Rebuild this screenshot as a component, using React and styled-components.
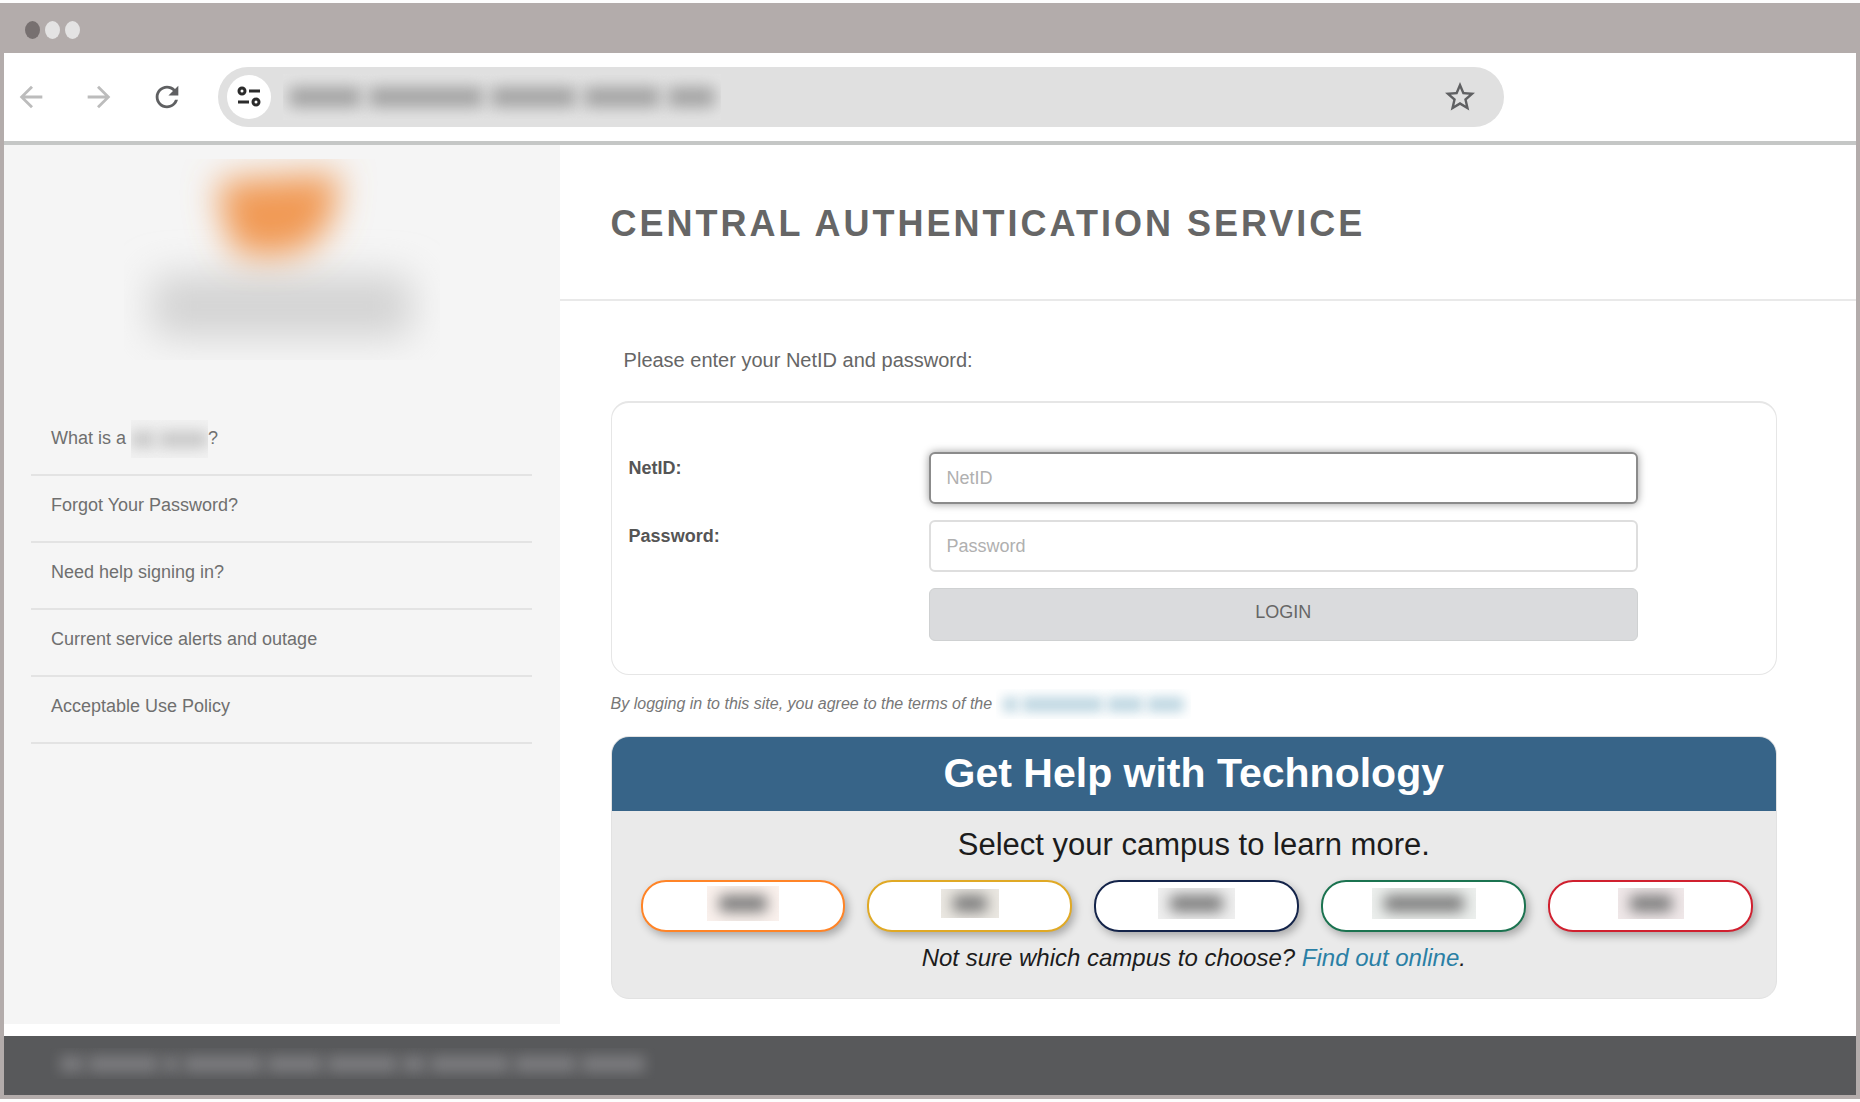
import React from "react";
import styled, { createGlobalStyle } from "styled-components";
import { MdArrowBack, MdArrowForward, MdRefresh, MdStarBorder } from "react-icons/md";

const GlobalStyle = createGlobalStyle`
  *, *::before, *::after { box-sizing: border-box; }
  body {
    margin: 0;
    background: #fdfdfd;
    color: #666;
    font-family: "Liberation Sans", Arial, sans-serif;
    font-size: 18px;
  }
`;

const Frame = styled.div`
  display: flex;
  min-height: 100vh;
  padding: 3px 0;
`;

const BrowserWindow = styled.div`
  flex: 1;
  display: flex;
  flex-direction: column;
  border: 4px solid #b3acab;
  border-top: 0;
  background: #fff;
`;

const TitleBar = styled.div`
  display: flex;
  align-items: center;
  gap: 5px;
  height: 50px;
  padding: 4px 0 0 21px;
  background: #b3acab;
`;

const Dot = styled.span`
  width: 15px;
  height: 18px;
  border-radius: 50%;
  background: ${(p) => (p.$dark ? "#777070" : "#e4e3e3")};
`;

const Toolbar = styled.div`
  display: flex;
  align-items: center;
  gap: 34px;
  height: 92px;
  padding: 0 19% 0 10px;
  border-bottom: 4px solid #c5c7c6;
`;

const IconButton = styled.button`
  display: grid;
  place-items: center;
  width: 34px;
  height: 36px;
  padding: 0;
  border: 0;
  background: none;
  color: ${(p) => (p.$muted ? "#bcbcbc" : "#5f6062")};
  cursor: pointer;
`;

const AddressBar = styled.div`
  flex: 1;
  display: flex;
  align-items: center;
  height: 60px;
  padding: 0 28px 0 9px;
  border-radius: 30px;
  background: #e0e0e0;

  ${IconButton}:last-child {
    margin-left: auto;
  }
`;

const SiteControls = styled.button`
  display: grid;
  place-items: center;
  width: 44px;
  height: 44px;
  margin-right: 12px;
  padding: 0;
  border: 0;
  border-radius: 50%;
  background: #fff;
  cursor: pointer;
`;

const RedactedBox = styled.span`
  flex: none;
  display: inline-flex;
  align-items: center;
  justify-content: center;
  gap: ${(p) => p.$gap}px;
  width: ${(p) => p.$width}px;
  height: ${(p) => p.$height}px;
  padding: 0 ${(p) => p.$inset}px;
  overflow: hidden;
  vertical-align: middle;
  background: ${(p) => p.$tint};
`;

const Smudge = styled.span`
  flex: ${(p) => p.$weight};
  height: ${(p) => p.$height}px;
  border-radius: 4px;
  background: ${(p) => p.$ink};
  filter: blur(${(p) => p.$blur}px);
`;

const Body = styled.div`
  flex: 1;
  display: flex;
`;

const Sidebar = styled.aside`
  width: 30%;
  padding: 14px 28px 0 27px;
  background: #f5f5f5;
`;

const Logo = styled.svg`
  display: block;
  width: 316px;
  height: 201px;
  margin: 0 auto 49px 93px;
`;

const NavList = styled.ul`
  margin: 0;
  padding: 0;
  list-style: none;
`;

const NavItem = styled.li`
  height: 67px;
  padding-left: 20px;
  border-bottom: 2px solid #e3e3e3;
  line-height: 58px;
`;

const NavLink = styled.a`
  color: #6f6f6f;
  text-decoration: none;
`;

const Content = styled.main`
  flex: 1;
`;

const Heading = styled.h1`
  margin: 0;
  padding: 4px 0 0 51px;
  border-bottom: 2px solid #e9e9e9;
  color: #666;
  font-size: 36px;
  line-height: 150px;
  letter-spacing: 3px;
`;

const Section = styled.div`
  padding: 47px 79px 0 51px;
`;

const Intro = styled.p`
  margin: 0 0 29px;
  padding-left: 13px;
  font-size: 20px;
  line-height: 24px;
`;

const LoginForm = styled.form`
  display: grid;
  grid-template-columns: 300px 1fr;
  row-gap: 16px;
  padding: 49px 138px 33px 17px;
  border: 1px solid #e6e6e6;
  border-top-width: 2px;
  border-radius: 18px;
`;

const Label = styled.label`
  padding-top: 6px;
  color: #555;
  font-weight: bold;
  line-height: 20px;
`;

const Field = styled.input`
  width: 100%;
  height: 52px;
  padding: 0 16px;
  border: ${(p) => (p.$active ? "2px solid #8b8b8b" : "2px solid #dedede")};
  border-radius: 6px;
  background: #fff;
  box-shadow: ${(p) => (p.$active ? "0 0 9px rgba(0, 0, 0, 0.4)" : "none")};
  color: #555;
  font: inherit;
  outline: none;

  &::placeholder {
    color: #b0b0b0;
    opacity: 1;
  }
`;

const LoginButton = styled.button`
  grid-column: 2;
  height: 53px;
  padding: 0 0 4px;
  border: 1px solid #cfd1d2;
  border-radius: 6px;
  background: #dadbdd;
  color: #666;
  font: inherit;
  cursor: pointer;
`;

const Terms = styled.p`
  display: flex;
  align-items: center;
  gap: 4px;
  height: 30px;
  margin: 14px 0 17px;
  color: #777;
  font-size: 16px;
  font-style: italic;
`;

const HelpPanel = styled.section`
  overflow: hidden;
  border: 1px solid #e2e2e2;
  border-radius: 18px;
  background: #eaeaea;
  color: #1c1c1c;
  text-align: center;
`;

const HelpTitle = styled.h2`
  margin: 0;
  padding-bottom: 2px;
  background: #376488;
  color: #fff;
  font-size: 41px;
  line-height: 72px;
`;

const HelpLead = styled.p`
  margin: 16px 0 17px;
  font-size: 31px;
  line-height: 36px;
`;

const CampusList = styled.div`
  display: grid;
  grid-template-columns: repeat(5, 1fr);
  gap: 22px;
  padding: 0 23px 0 29px;
`;

const CampusButton = styled.button`
  display: flex;
  align-items: center;
  justify-content: center;
  height: 52px;
  padding: 0 0 5px;
  border: 2px solid ${(p) => p.$color};
  border-radius: 25px;
  background: #fff;
  box-shadow: 3px 4px 8px rgba(0, 0, 0, 0.28);
  cursor: pointer;
`;

const HelpNote = styled.p`
  margin: 12px 0 26px;
  font-size: 24px;
  font-style: italic;
  line-height: 28px;
`;

const HelpLink = styled.a`
  color: #2a7fa5;
  text-decoration: none;
`;

const Footer = styled.footer`
  display: flex;
  align-items: center;
  height: 59px;
  margin-top: 12px;
  padding: 0 0 4px 46px;
  background: #58595b;
`;

function Redacted({ width, height, words, bar, ink, tint = "transparent", gap = 4, blur = 5, inset = 0 }) {
  return (
    <RedactedBox $width={width} $height={height} $gap={gap} $tint={tint} $inset={inset} aria-hidden="true">
      {words.map((weight, i) => (
        <Smudge key={i} $weight={weight} $height={bar} $ink={ink} $blur={blur} />
      ))}
    </RedactedBox>
  );
}

function TuneIcon() {
  return (
    <svg width="24" height="22" viewBox="0 0 24 22" fill="none" stroke="#2b2b2b" strokeWidth="3" aria-hidden="true">
      <circle cx="5" cy="5" r="3" />
      <path d="M12 5h11M1 16h11" />
      <circle cx="19" cy="16" r="3" />
    </svg>
  );
}

function BlurredLogo() {
  return (
    <Logo viewBox="0 0 316 201" aria-hidden="true">
      <defs>
        <filter id="softMark" x="-60%" y="-60%" width="220%" height="220%">
          <feGaussianBlur stdDeviation="17" />
        </filter>
        <filter id="softWord" x="-30%" y="-100%" width="160%" height="300%">
          <feGaussianBlur stdDeviation="19" />
        </filter>
      </defs>
      <rect x="28" y="116" width="260" height="62" rx="10" fill="#d3d3d3" filter="url(#softWord)" />
      <path d="M94 22L216 14L208 62Q186 94 160 96L116 96Q98 76 94 22Z" fill="#f19a55" filter="url(#softMark)" />
    </Logo>
  );
}

const links = ["Forgot Your Password?", "Need help signing in?", "Current service alerts and outage", "Acceptable Use Policy"];

const campuses = [
  { color: "#ff8427", width: 72, height: 35, tint: "#faf1ed" },
  { color: "#e0a925", width: 58, height: 29, tint: "#ebe8e2" },
  { color: "#14244a", width: 77, height: 31, tint: "#efefef" },
  { color: "#1b7350", width: 104, height: 31, tint: "#ecefed" },
  { color: "#d0202f", width: 66, height: 31, tint: "#f0e8e9" },
];

export default function App() {
  return (
    <Frame>
      <GlobalStyle />
      <BrowserWindow>
        <TitleBar>
          <Dot $dark />
          <Dot />
          <Dot />
        </TitleBar>
        <Toolbar>
          <IconButton $muted aria-label="Back"><MdArrowBack size={34} /></IconButton>
          <IconButton $muted aria-label="Forward"><MdArrowForward size={34} /></IconButton>
          <IconButton aria-label="Reload"><MdRefresh size={34} /></IconButton>
          <AddressBar>
            <SiteControls aria-label="Site controls"><TuneIcon /></SiteControls>
            <Redacted width={438} height={46} words={[17, 27, 20, 18, 11]} bar={20} ink="#a0a0a0" tint="#e3e3e3" gap={8} blur={8} inset={6} />
            <IconButton aria-label="Bookmark"><MdStarBorder size={36} /></IconButton>
          </AddressBar>
        </Toolbar>

        <Body>
          <Sidebar>
            <BlurredLogo />
            <nav>
              <NavList>
                <NavItem>
                  <NavLink href="#netid">
                    What is a <Redacted width={77} height={38} words={[2, 4]} bar={17} ink="#c8c8c8" tint="#f2f2f2" blur={7} />?
                  </NavLink>
                </NavItem>
                {links.map((text) => (
                  <NavItem key={text}>
                    <NavLink href="#help">{text}</NavLink>
                  </NavItem>
                ))}
              </NavList>
            </nav>
          </Sidebar>

          <Content>
            <Heading>CENTRAL AUTHENTICATION SERVICE</Heading>
            <Section>
              <Intro>Please enter your NetID and password:</Intro>
              <LoginForm onSubmit={(e) => e.preventDefault()}>
                <Label htmlFor="netid">NetID:</Label>
                <Field id="netid" type="text" placeholder="NetID" $active />
                <Label htmlFor="password">Password:</Label>
                <Field id="password" type="password" placeholder="Password" />
                <LoginButton type="submit">LOGIN</LoginButton>
              </LoginForm>
              <Terms>
                By logging in to this site, you agree to the terms of the
                <Redacted width={195} height={30} words={[2, 11, 5, 5]} bar={15} ink="#bdd6e1" blur={6} inset={7} />
              </Terms>
              <HelpPanel>
                <HelpTitle>Get Help with Technology</HelpTitle>
                <HelpLead>Select your campus to learn more.</HelpLead>
                <CampusList>
                  {campuses.map((c, i) => (
                    <CampusButton key={c.color} $color={c.color} aria-label={`Campus ${i + 1}`}>
                      <Redacted width={c.width} height={c.height} words={[1]} bar={17} ink="#7c7c7c" tint={c.tint} blur={7} inset={12} />
                    </CampusButton>
                  ))}
                </CampusList>
                <HelpNote>
                  Not sure which campus to choose? <HelpLink href="#campus">Find out online</HelpLink>.
                </HelpNote>
              </HelpPanel>
            </Section>
          </Content>
        </Body>

        <Footer>
          <Redacted width={605} height={31} words={[3, 9, 2, 10, 7, 9, 3, 10, 8, 8]} bar={16} ink="#7e7e81" blur={7} inset={10} />
        </Footer>
      </BrowserWindow>
    </Frame>
  );
}
